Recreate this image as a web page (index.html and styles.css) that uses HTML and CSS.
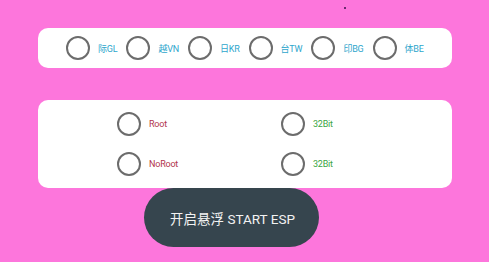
FILE: index.html
```html
<!DOCTYPE html>
<html>
<head>
<meta charset="utf-8">
<link rel="stylesheet" href="styles.css">
</head>
<body>
<div class="page">
  <span class="speck"></span>
  <div class="card region">
    <div class="opt"><span class="radio"></span><span class="lbl blue">际GL</span></div>
    <div class="opt"><span class="radio"></span><span class="lbl blue">越VN</span></div>
    <div class="opt"><span class="radio"></span><span class="lbl blue">日KR</span></div>
    <div class="opt"><span class="radio"></span><span class="lbl blue">台TW</span></div>
    <div class="opt"><span class="radio"></span><span class="lbl blue">印BG</span></div>
    <div class="opt"><span class="radio"></span><span class="lbl blue">体BE</span></div>
  </div>
  <div class="card modes">
    <div class="opt"><span class="radio"></span><span class="lbl red">Root</span></div>
    <div class="opt"><span class="radio"></span><span class="lbl green">32Bit</span></div>
    <div class="opt"><span class="radio"></span><span class="lbl red">NoRoot</span></div>
    <div class="opt"><span class="radio"></span><span class="lbl green">32Bit</span></div>
  </div>
  <button class="start">开启悬浮 START ESP</button>
</div>
</body>
</html>
```
FILE: styles.css
```css
html, body {
  margin: 0;
  padding: 0;
  background: #fd76dc;
  width: 489px;
  height: 262px;
  overflow: hidden;
  font-family: Roboto, "Noto Sans CJK SC", sans-serif;
}
.page {
  position: relative;
  padding-top: 28px;
}
.speck {
  position: absolute;
  left: 344px;
  top: 7px;
  width: 2px;
  height: 2px;
  background: #6a2a70;
}
.card {
  background: #ffffff;
  border-radius: 10px;
  margin-left: 38px;
  width: 414px;
  box-sizing: border-box;
}
.region {
  height: 40px;
  display: flex;
  align-items: center;
  padding-left: 28px;
  gap: 9px;
}
.modes {
  margin-top: 32px;
  height: 88px;
  display: grid;
  grid-template-columns: 164px 120px;
  grid-auto-rows: 24px;
  row-gap: 16px;
  padding: 12px 0 0 79px;
}
.opt {
  display: flex;
  align-items: center;
}
.radio {
  width: 24px;
  height: 24px;
  box-sizing: border-box;
  border: 2.5px solid #6c6c6c;
  border-radius: 50%;
  flex: none;
}
.lbl {
  margin-left: 8px;
  font-size: 9px;
  letter-spacing: -0.2px;
  white-space: nowrap;
}
.blue { color: #2ea6cc; }
.red { color: #b2344c; }
.green { color: #3aa542; }
.start {
  display: block;
  margin: 0 0 0 144px;
  width: 175px;
  height: 59px;
  border: none;
  border-radius: 30px;
  background: #36454e;
  color: #f2f2f2;
  font-family: Roboto, "Noto Sans CJK SC", sans-serif;
  font-size: 13.5px;
  padding: 0 0 0 2px;
}
```
